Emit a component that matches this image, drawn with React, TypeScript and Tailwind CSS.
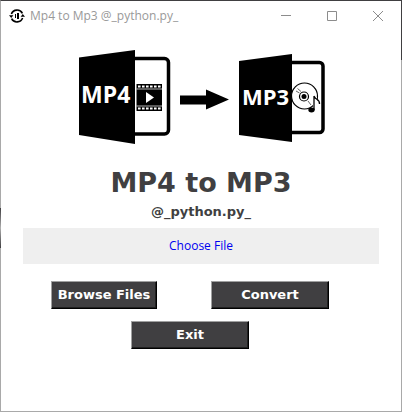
import type { ReactNode } from "react";

const UI_FONT = "font-['Open_Sans','Noto_Sans',sans-serif]";

function AppIcon() {
  return (
    <svg width="16" height="16" viewBox="0 0 16 16" fill="none" stroke="#000" aria-hidden="true">
      <path d="M2.400 6A6 6 0 0 1 13.400 5.400M13.600 10A6 6 0 0 1 2.600 10.600" strokeWidth="1.600" />
      <path d="M0 7.200h4.400L2.200 10zM16 8.800h-4.400L13.800 6z" fill="#000" stroke="none" />
      <path d="M6.500 6v4" strokeWidth="1" />
      <path d="M9 5v6" strokeWidth="2" />
    </svg>
  );
}

function CaptionButton({ label, children }: { label: string; children: ReactNode }) {
  return (
    <button type="button" aria-label={label} className="flex h-7 w-[46px] items-center justify-center">
      <svg width="10" height="10" viewBox="0 0 10 10" fill="none" stroke="#8c8c8c">
        {children}
      </svg>
    </button>
  );
}

function Banner() {
  return (
    <svg width="244" height="96" viewBox="0 0 244 96" className="overflow-visible" role="img" aria-label="MP4 to MP3">
      <rect x="40" y="9.500" width="49.500" height="75.500" rx="4" fill="#fff" stroke="#000" strokeWidth="3.500" />
      <path d="M0 8.500 56 1v94L0 86z" fill="#000" />
      <text x="2" y="54" fill="#fff" fontSize="23" fontWeight="700" fontFamily="'Open Sans','Noto Sans',sans-serif">MP4</text>
      <path d="M57.500 35H83v27H57.500z" fill="#000" />
      <path d="M59 37.500h23M59 59.500h23" stroke="#fff" strokeWidth="1.800" strokeDasharray="2.600 1.400" />
      <path d="M57.500 40h25.500M57.500 57h25.500" stroke="#fff" strokeWidth="0.700" />
      <path d="M67 43v11l8-5.500z" fill="#fff" />
      <path d="M101 46.500h26v-6l23 10-23 10v-5h-26z" fill="#000" />
      <rect x="200" y="13.500" width="44" height="70" rx="3.500" fill="#fff" stroke="#000" strokeWidth="3.500" />
      <path d="M160 12 213 5v88l-53-7z" fill="#000" />
      <circle cx="225.500" cy="47" r="13" fill="#fff" stroke="#000" strokeWidth="1.200" />
      <circle cx="225" cy="47.500" r="4.500" fill="none" stroke="#000" strokeWidth="1.200" />
      <circle cx="225" cy="47.500" r="2.500" fill="#000" />
      <path d="M218.500 39.500l3.500 3M217 42l3.500 2M229 52l3 4" stroke="#000" strokeWidth="0.600" />
      <path d="M236 48v13" stroke="#fff" strokeWidth="4" />
      <path d="M235 47v14M235 47c1 4 6 3 5.500 8" fill="none" stroke="#000" strokeWidth="1.300" />
      <ellipse cx="232.500" cy="61" rx="3.200" ry="2.400" fill="#000" />
      <text x="163" y="56" fill="#fff" fontSize="22" fontWeight="700" fontFamily="'Open Sans','Noto Sans',sans-serif">MP3</text>
    </svg>
  );
}

function ActionButton({ className, children }: { className: string; children: ReactNode }) {
  return (
    <button
      type="button"
      className={`h-7 border border-t-[#a0a0a0] border-r-black border-b-black border-l-[#a0a0a0] bg-[#403f41] text-[13px] leading-4 font-bold text-white shadow-[inset_-1px_-1px_0_#202020] ${className}`}
    >
      {children}
    </button>
  );
}

export default function App() {
  return (
    <main className="relative flex min-h-screen flex-col border border-t-[#403f41] border-r-[#a9a9a9] border-b-[#a9a9a9] border-l-[#a9a9a9] bg-white font-['DejaVu_Sans',Verdana,sans-serif] text-[#403f41]">
      {/* Darker stretches of the window frame */}
      <span className="absolute -top-px -right-px h-[60px] w-px bg-[#403f41]" />
      <span className="absolute top-[207px] -left-px h-10 w-px bg-linear-to-b from-[#403f41] via-[#b0b0b0] to-[#403f41]" />
      <header className="flex h-[30px] items-center pl-2">
        <AppIcon />
        <h1 className={`ml-[5px] grow text-xs text-[#999] ${UI_FONT}`}>Mp4 to Mp3 @_python.py_</h1>
        <div className="flex">
          <CaptionButton label="Minimize"><path d="M0 4.500h10" /></CaptionButton>
          <CaptionButton label="Maximize"><path d="M.5.5h9v9h-9z" /></CaptionButton>
          <CaptionButton label="Close"><path d="M0 0l10 10M10 0L0 10" /></CaptionButton>
        </div>
      </header>
      <section className="flex flex-col items-center px-[22px] pt-[18px]">
        <Banner />
        <h2 className="mt-5 text-[27px] leading-9 font-bold">MP4 to MP3</h2>
        <p className="mt-[3px] text-[13px] leading-4 font-bold">@_python.py_</p>
        <label className={`mt-2 flex h-9 w-full cursor-pointer items-center justify-center bg-[#efefef] text-xs text-[#0000f0] ${UI_FONT}`}>
          <input type="file" className="sr-only" />
          Choose File
        </label>
      </section>
      <section className="flex flex-col items-center gap-3 pt-[17px] pr-[22px]">
        <div className="flex gap-[54px]">
          <ActionButton className="w-[106px]">Browse Files</ActionButton>
          <ActionButton className="w-[118px]">Convert</ActionButton>
        </div>
        <ActionButton className="w-[118px]">Exit</ActionButton>
      </section>
    </main>
  );
}
